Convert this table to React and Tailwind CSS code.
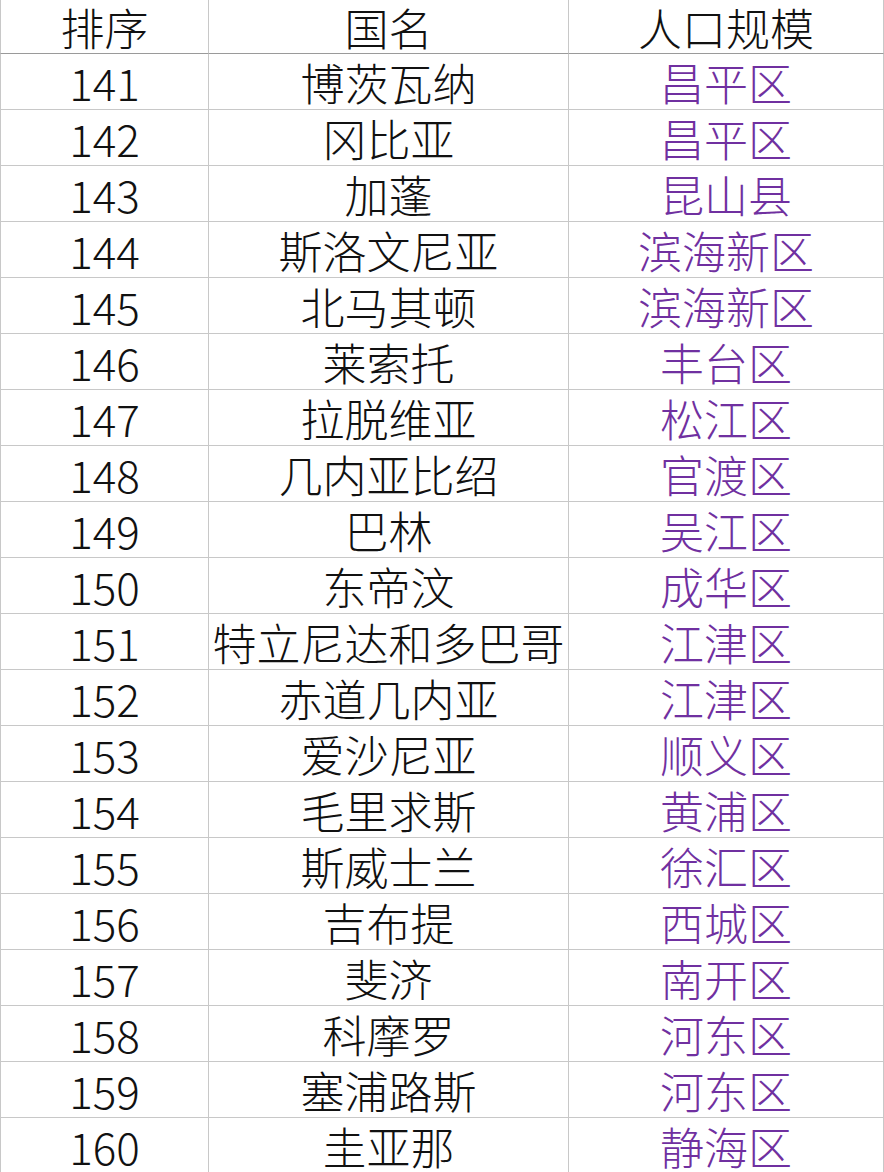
const rows = [
  ["141", "博茨瓦纳", "昌平区"],
  ["142", "冈比亚", "昌平区"],
  ["143", "加蓬", "昆山县"],
  ["144", "斯洛文尼亚", "滨海新区"],
  ["145", "北马其顿", "滨海新区"],
  ["146", "莱索托", "丰台区"],
  ["147", "拉脱维亚", "松江区"],
  ["148", "几内亚比绍", "官渡区"],
  ["149", "巴林", "吴江区"],
  ["150", "东帝汶", "成华区"],
  ["151", "特立尼达和多巴哥", "江津区"],
  ["152", "赤道几内亚", "江津区"],
  ["153", "爱沙尼亚", "顺义区"],
  ["154", "毛里求斯", "黄浦区"],
  ["155", "斯威士兰", "徐汇区"],
  ["156", "吉布提", "西城区"],
  ["157", "斐济", "南开区"],
  ["158", "科摩罗", "河东区"],
  ["159", "塞浦路斯", "河东区"],
  ["160", "圭亚那", "静海区"],
];

const cell =
  "flex items-center justify-center border-r border-b border-[#c8c8c8]";

export default function App() {
  return (
    <main
      className="h-[1172px] w-[884px] overflow-hidden bg-white text-[44px] font-light leading-[48px] text-[#111]"
      style={{ fontFamily: '"Noto Sans CJK SC", "Noto Sans", sans-serif' }}
    >
      <div className="grid grid-cols-[209px_360px_1fr] auto-rows-[56px] grid-rows-[54px]">
        <div className={`${cell} border-l border-b-[#9a9a9a]`}>排序</div>
        <div className={`${cell} border-b-[#9a9a9a]`}>国名</div>
        <div className={`${cell} border-b-[#9a9a9a]`}>人口规模</div>

        {rows.map(([rank, country, district]) => (
          <div key={rank} className="contents">
            <div className={`${cell} border-l`}>{rank}</div>
            <div className={cell}>{country}</div>
            <div className={`${cell} text-[#7030a0]`}>{district}</div>
          </div>
        ))}
      </div>
    </main>
  );
}
